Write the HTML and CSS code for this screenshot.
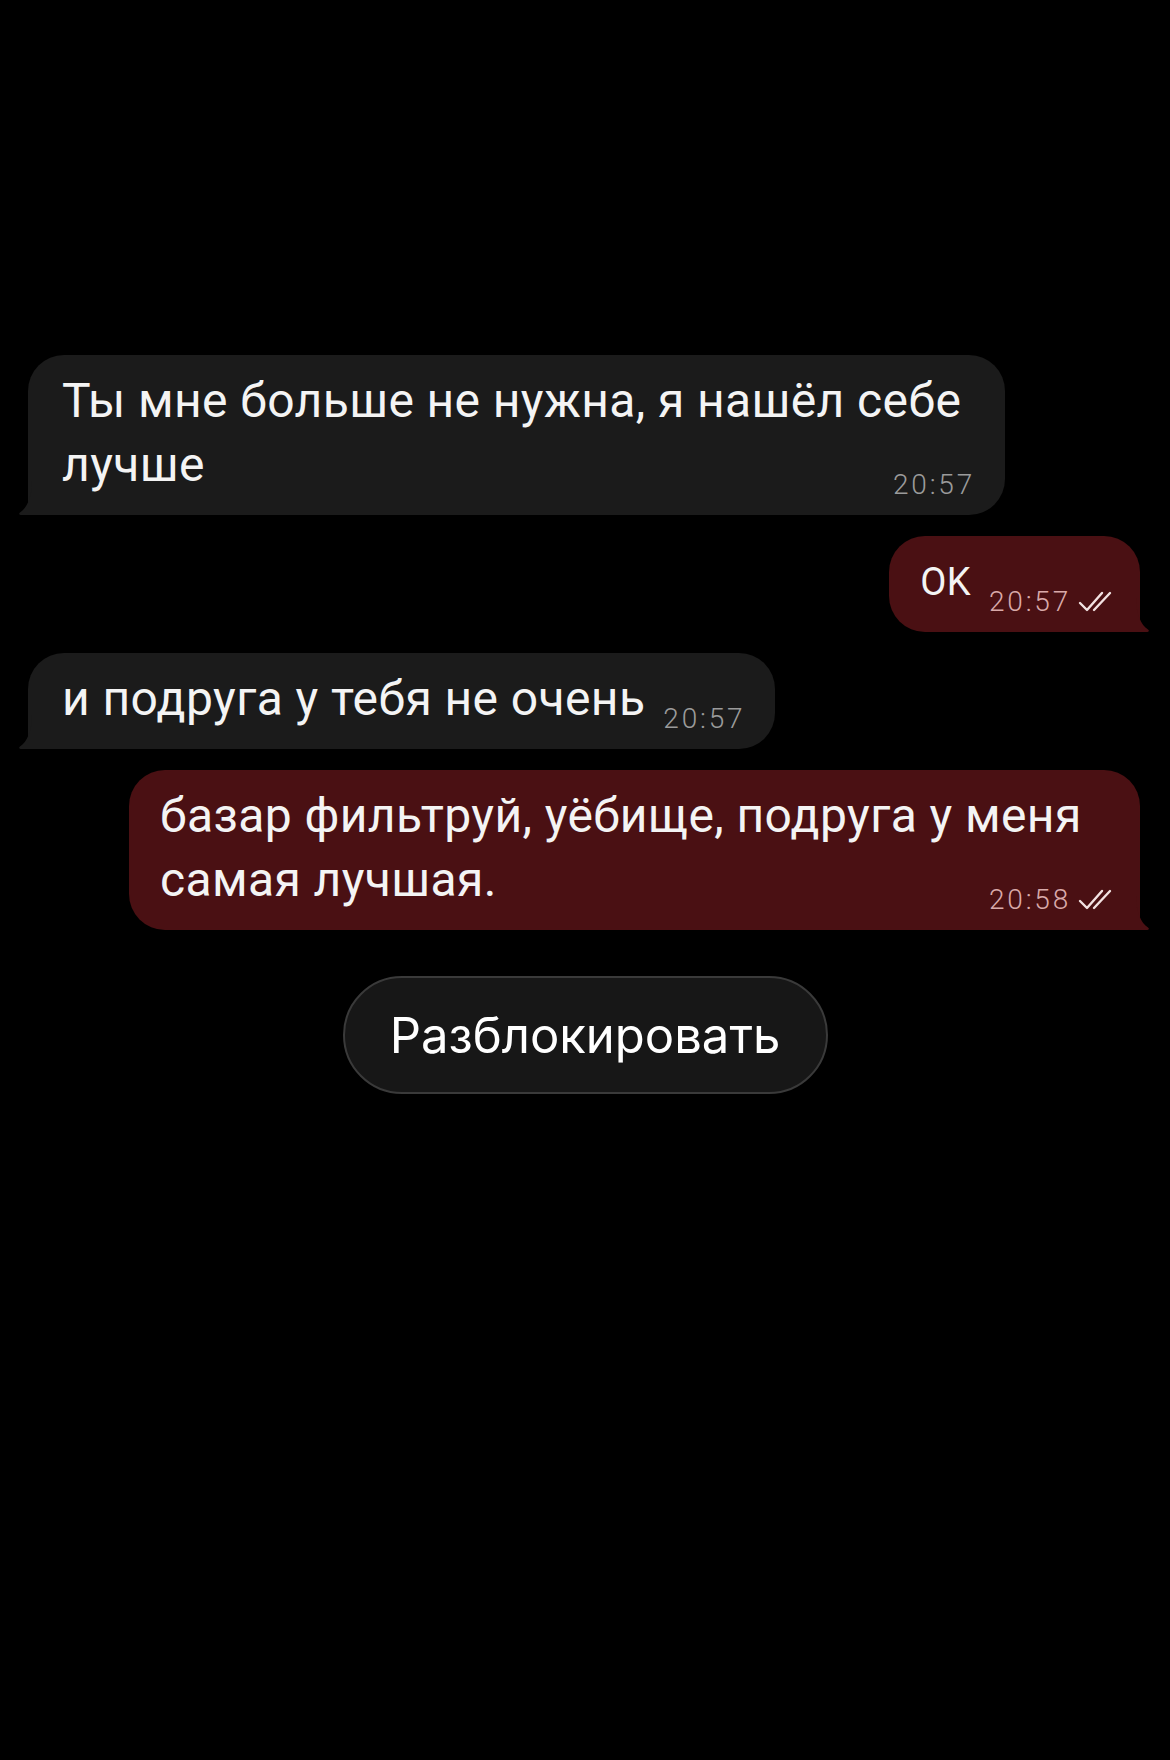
FILE: index.html
```html
<!DOCTYPE html>
<html lang="ru">
<head>
    <meta charset="UTF-8">
    <meta name="viewport" content="width=device-width, initial-scale=1.0">
    <title>Чат</title>
    <link rel="stylesheet" href="styles.css">
</head>
<body>
    <div class="chat">
        <!-- входящее -->
        <div class="row row-in">
            <div class="bubble bubble-in">Ты мне больше не нужна, я нашёл себе лучше<span class="meta"><span class="time">20:57</span></span><svg class="tail" viewBox="0 0 14 34"><path d="M14 0 C14 16 9 27 2 31.5 Q0 33 2.5 34 L14 34 Z"/></svg></div>
        </div>

        <!-- исходящее -->
        <div class="row row-out">
            <div class="bubble bubble-out bubble-small">OK<span class="meta"><span class="time">20:57</span><svg class="check" viewBox="0 0 40 24"><path d="M3 13 L10 20 L25 3 M17 20 L33 3"/></svg></span><svg class="tail" viewBox="0 0 14 34"><path d="M0 0 C0 16 5 27 12 31.5 Q14 33 11.5 34 L0 34 Z"/></svg></div>
        </div>

        <div class="row row-in">
            <div class="bubble bubble-in">и подруга у тебя не очень<span class="meta"><span class="time">20:57</span></span><svg class="tail" viewBox="0 0 14 34"><path d="M14 0 C14 16 9 27 2 31.5 Q0 33 2.5 34 L14 34 Z"/></svg></div>
        </div>

        <div class="row row-out">
            <div class="bubble bubble-out">базар фильтруй, уёбище, подруга у меня самая лучшая.<span class="meta"><span class="time">20:58</span><svg class="check" viewBox="0 0 40 24"><path d="M3 13 L10 20 L25 3 M17 20 L33 3"/></svg></span><svg class="tail" viewBox="0 0 14 34"><path d="M0 0 C0 16 5 27 12 31.5 Q14 33 11.5 34 L0 34 Z"/></svg></div>
        </div>

        <!-- кнопка разблокировки -->
        <div class="unblock-wrap">
            <button class="unblock">Разблокировать</button>
        </div>
    </div>
</body>
</html>
```

FILE: styles.css
```css
body {
    margin: 0;
    background: #000;
    font-family: Roboto, "Noto Sans", sans-serif;
    color: #f4f4f4;
}
.chat {
    display: flex;
    flex-direction: column;
    gap: 21px;
    padding-top: 355px;
}
.row {
    display: flex;
}
.row-in {
    justify-content: flex-start;
    padding-left: 28px;
}
.row-out {
    justify-content: flex-end;
    padding-right: 30px;
}
.bubble {
    position: relative;
    box-sizing: border-box;
    font-size: 48px;
    line-height: 64px;
    letter-spacing: 0.4px;
    border-radius: 36px;
}
.bubble-in {
    background: #1b1b1b;
    border-bottom-left-radius: 0;
    max-width: 977px;
    padding: 14px 30px 18px 34px;
}
.bubble-out {
    background: #4a1013;
    border-bottom-right-radius: 0;
    max-width: 1011px;
    padding: 14px 23px 18px 31px;
}
.bubble-small {
    font-size: 38px;
}
.meta {
    float: right;
    display: flex;
    align-items: center;
    gap: 6px;
    margin: 38px 0 -38px 18px;
    font-size: 28px;
    line-height: 28px;
    font-weight: 300;
    letter-spacing: 2.8px;
}
.bubble-in .meta {
    color: #9b9b9b;
}
.bubble-out .meta {
    color: #d9aaaa;
}
.check {
    width: 40px;
    height: 24px;
    fill: none;
    stroke: #f3e2e2;
    stroke-width: 2.4;
    stroke-linecap: round;
    stroke-linejoin: round;
}
.tail {
    position: absolute;
    bottom: 0;
    width: 14px;
    height: 34px;
}
.bubble-in .tail {
    left: -10px;
    fill: #1b1b1b;
}
.bubble-out .tail {
    right: -10px;
    fill: #4a1013;
}
.unblock-wrap {
    display: flex;
    justify-content: center;
    margin-top: 25px;
}
.unblock {
    width: 485px;
    height: 118px;
    box-sizing: border-box;
    border: 2px solid #3a3a3a;
    border-radius: 59px;
    background: #171717;
    color: #fff;
    font-family: Inter, "Noto Sans", sans-serif;
    font-size: 49px;
    cursor: pointer;
}
```
